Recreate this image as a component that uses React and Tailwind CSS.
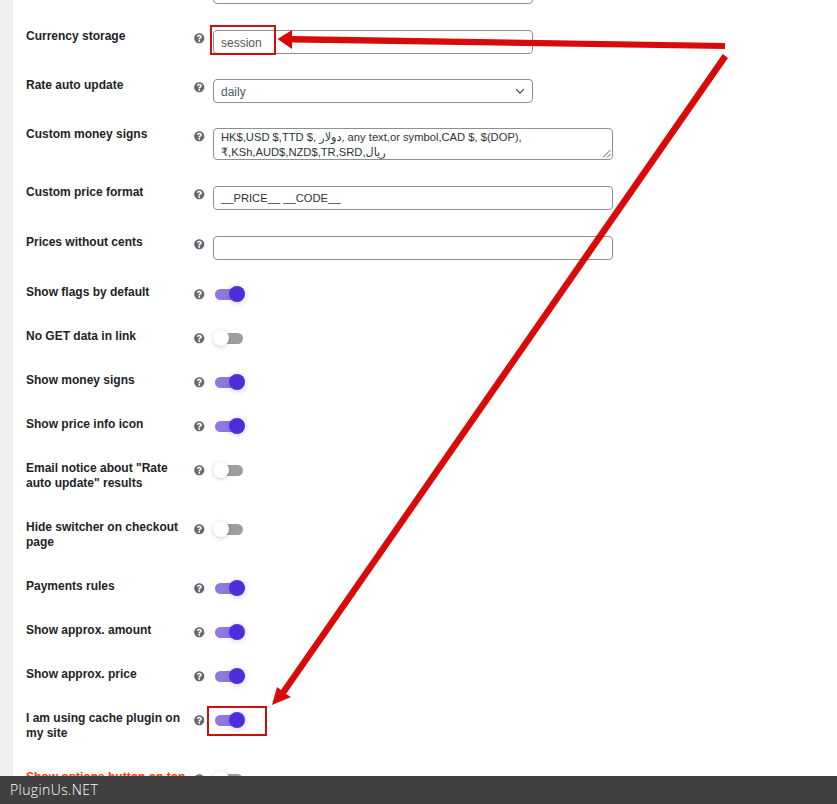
import React from 'react'
import { FaQuestionCircle } from 'react-icons/fa'

const HelpIcon = () => (
  <div className="w-[19px] shrink-0 pt-[3px] text-[#646970] text-[10.5px]">
    <FaQuestionCircle />
  </div>
)

const Toggle = ({ on }) => (
  <div className={`relative w-[32px] h-[16px] flex items-center ${on ? 'justify-start' : 'justify-end'}`}>
    <div className={on ? 'ml-[2px] w-[26px] h-[11px] rounded-full bg-[#8f79de]' : 'mr-[2px] w-[26px] h-[11px] rounded-full bg-[#9e9e9e]'} />
    {on ? (
      <div className="absolute right-0 top-0 w-[16px] h-[16px] rounded-full bg-[#4f2ddb] shadow-[0_1px_6px_rgba(79,45,219,0.25)]" />
    ) : (
      <div className="absolute left-0 top-0 w-[16px] h-[16px] rounded-full bg-white shadow-[0_1px_4px_rgba(0,0,0,0.2)]" />
    )}
  </div>
)

const inputCls = 'h-[24px] border border-[#8c8f94] rounded-[4px] bg-white px-[7px]'

const Row = ({ label, height, children, labelCls = 'text-[#1d2327]' }) => (
  <div className={`flex items-start ${height}`}>
    <div className={`w-[168px] shrink-0 -mt-px font-bold text-[12px] leading-[15px] ${labelCls}`}>{label}</div>
    <HelpIcon />
    {children}
  </div>
)

const toggles = [
  { label: 'Show flags by default', on: true, height: 'h-[44px]' },
  { label: 'No GET data in link', on: false, height: 'h-[44px]' },
  { label: 'Show money signs', on: true, height: 'h-[44px]' },
  { label: 'Show price info icon', on: true, height: 'h-[44px]' },
  { label: 'Email notice about "Rate auto update" results', on: false, height: 'h-[59px]' },
  { label: 'Hide switcher on checkout page', on: false, height: 'h-[59px]' },
  { label: 'Payments rules', on: true, height: 'h-[44px]' },
  { label: 'Show approx. amount', on: true, height: 'h-[44px]' },
  { label: 'Show approx. price', on: true, height: 'h-[44px]' },
  { label: 'I am using cache plugin on my site', on: true, height: 'h-[59px]' },
]

export default function App() {
  return (
    <div className="relative h-[804px] w-[837px] overflow-hidden bg-[#f0f0f1] font-['Liberation_Sans','DejaVu_Sans',sans-serif]">
      <div className="ml-[13px] h-full bg-white pl-[13px]">
        {/* input cut off by the top edge */}
        <div className="mt-[-20px] ml-[187px] w-[320px] h-[24px] border border-[#8c8f94] rounded-[4px]" />

        <div className="mt-[26px]">
          <Row label="Currency storage" height="h-[49px]">
            <div className={`${inputCls} w-[320px] text-[12px] leading-[24px] text-[#50575e]`}>session</div>
          </Row>
          <Row label="Rate auto update" height="h-[49px]">
            <div className={`${inputCls} w-[320px] text-[12px] leading-[24px] text-[#50575e] flex items-start justify-between pr-[6px]`}>
              <span>daily</span>
              <svg className="mt-[5px]" width="12" height="12" viewBox="0 0 20 20" fill="none" stroke="#3c434a" strokeWidth="2">
                <path d="M3.5 7l6.5 6.5 6.5-6.5" />
              </svg>
            </div>
          </Row>
          <Row label="Custom money signs" height="h-[58px]">
            <div className="relative w-[400px] h-[32px] border border-[#8c8f94] rounded-[4px] bg-white px-[7px] pt-px text-[11.2px] leading-[14.5px] text-[#2c3338]">
              <div>HK$,USD $,TTD $, دولار, any text,or symbol,CAD $, $(DOP),</div>
              <div>₹,KSh,AUD$,NZD$,TR,SRD,ریال</div>
              <svg className="absolute right-[1px] bottom-[1px]" width="9" height="9" viewBox="0 0 9 9" stroke="#555" strokeWidth="1">
                <path d="M8.5 1L1 8.5M8.5 5L5 8.5" />
              </svg>
            </div>
          </Row>
          <Row label="Custom price format" height="h-[50px]">
            <div className={`${inputCls} w-[400px] text-[11.2px] leading-[22px] text-[#2c3338]`}>__PRICE__ __CODE__</div>
          </Row>
          <Row label="Prices without cents" height="h-[50px]">
            <div className={`${inputCls} w-[400px]`} />
          </Row>

          {toggles.map((t) => (
            <Row key={t.label} label={t.label} height={t.height}>
              <Toggle on={t.on} />
            </Row>
          ))}

          <Row label="Show options button on top" height="h-[44px]" labelCls="text-[#ff3b00]">
            <Toggle on={false} />
          </Row>
        </div>
      </div>

      {/* annotations drawn on top of the screenshot */}
      <div className="absolute left-[210px] top-[25px] w-[66px] h-[30px] border-2 border-[#cc0f0f]" />
      <div className="absolute left-[207px] top-[706px] w-[60px] h-[30px] border-2 border-[#cc0f0f]" />
      <svg className="absolute left-0 top-0" width="837" height="804" fill="#d90a0a">
        <path d="M725 43L292 36V30L277.5 39L292 49V42.5L725 49Z" />
        <path d="M722.7 54L728 58L286 694L291 697L272 705L277 687L281 690Z" />
      </svg>

      <div className="absolute left-0 right-0 bottom-0 h-[28px] bg-[#404040] pl-[10px] text-white text-[14px] leading-[28px] tracking-[0.4px] font-light font-['Open_Sans',sans-serif]">
        PluginUs.NET
      </div>
    </div>
  )
}
